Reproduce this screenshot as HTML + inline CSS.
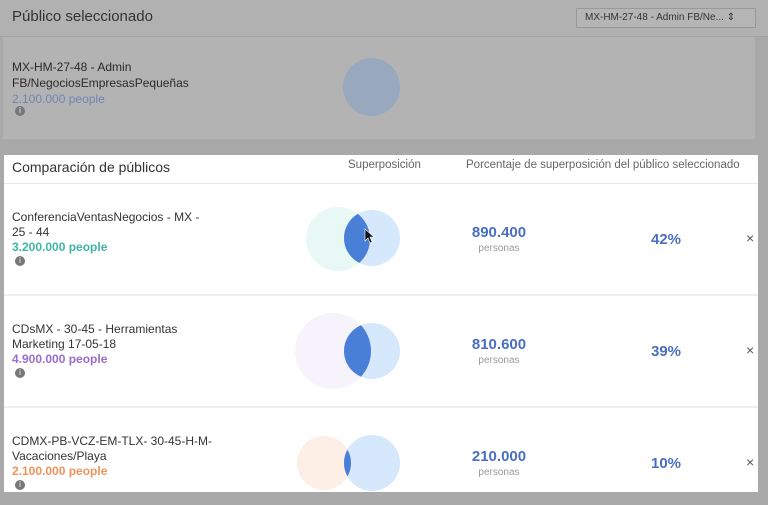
<!DOCTYPE html><html><head><style>
body{margin:0;width:768px;height:505px;overflow:hidden;background:#a9a9a9;font-family:"Liberation Sans",sans-serif;position:relative}
.a{position:absolute}
.t{font-size:12px;color:#333;line-height:15px}
.i{width:10px;height:10px;border-radius:50%;background:#777;color:#ccc;font-size:8px;text-align:center;line-height:10px;font-weight:bold}
.n{font-size:15px;color:#4a6fc0;font-weight:bold;width:120px;text-align:center}
.p{font-size:10px;color:#999;width:120px;text-align:center}
.pc{font-size:15px;color:#4a6fc0;font-weight:bold}
.x{font-size:14px;color:#555}
</style></head><body>
<div class="a" style="left:0;top:0;width:768px;height:36px;background:#b1b1b1;border-bottom:1px solid #a2a2a2"></div>
<div class="a" style="left:12px;top:8px;font-size:15px;color:#333">Público seleccionado</div>
<div class="a" style="left:576px;top:8px;width:178px;height:18px;border:1px solid #999;background:#b5b5b5;font-size:10px;line-height:18px;color:#333;text-indent:8px">MX-HM-27-48 - Admin FB/Ne... ⇕</div>
<div class="a" style="left:3px;top:37px;width:752px;height:102px;background:#b3b3b3"></div>
<div class="a t" style="left:12px;top:59px;color:#2a2a2a;line-height:16px">MX-HM-27-48 - Admin<br>FB/NegociosEmpresasPequeñas<br><span style="color:#6f86b4">2.100.000 people</span></div>
<div class="a i" style="left:15px;top:106px">i</div>
<div class="a" style="left:343px;top:58px;width:57px;height:58px;border-radius:50%;background:#98a9bf"></div>
<div class="a" style="left:4px;top:155px;width:754px;height:337px;background:#fff"></div>
<div class="a" style="left:4px;top:183px;width:754px;height:1px;background:#e6e6e6"></div>
<div class="a" style="left:4px;top:294px;width:754px;height:2px;background:#eee"></div>
<div class="a" style="left:4px;top:406px;width:754px;height:2px;background:#eee"></div>
<div class="a" style="left:12px;top:159px;font-size:14px;color:#333">Comparación de públicos</div>
<div class="a" style="left:348px;top:159px;font-size:11.5px;color:#666">Superposición</div>
<div class="a" style="left:466px;top:159px;font-size:11.5px;color:#666;white-space:nowrap">Porcentaje de superposición del público seleccionado</div>
<svg class="a" style="left:0;top:0" width="768" height="505">
<defs><clipPath id="c1"><circle cx="372" cy="238" r="28"/></clipPath><clipPath id="c2"><circle cx="372" cy="351" r="28"/></clipPath><clipPath id="c3"><circle cx="372" cy="463" r="28"/></clipPath></defs>
<circle cx="338" cy="239" r="32" fill="#e8f8f5"/><circle cx="372" cy="238" r="28" fill="#d6e8fb"/><circle cx="338" cy="239" r="32" fill="#4a7fd8" clip-path="url(#c1)"/>
<circle cx="333" cy="351" r="38" fill="#f7f3fc"/><circle cx="372" cy="351" r="28" fill="#d6e8fb"/><circle cx="333" cy="351" r="38" fill="#4a7fd8" clip-path="url(#c2)"/>
<circle cx="324" cy="463" r="27" fill="#fdeee6"/><circle cx="372" cy="463" r="28" fill="#d6e8fb"/><circle cx="324" cy="463" r="27" fill="#4a7fd8" clip-path="url(#c3)"/>
<path d="M365 229 l0 12 l3 -3 l2 5 l2 -1 l-2 -5 l4 0z" fill="#111" stroke="#fff" stroke-width=".6"/>
</svg>
<div class="a t" style="left:12px;top:210px">ConferenciaVentasNegocios - MX -<br>25 - 44<br><b style="color:#3fb5a8">3.200.000 people</b></div>
<div class="a i" style="left:15px;top:256px">i</div>
<div class="a t" style="left:12px;top:322px">CDsMX - 30-45 - Herramientas<br>Marketing 17-05-18<br><b style="color:#9a6ccb">4.900.000 people</b></div>
<div class="a i" style="left:15px;top:368px">i</div>
<div class="a t" style="left:12px;top:434px">CDMX-PB-VCZ-EM-TLX- 30-45-H-M-<br>Vacaciones/Playa<br><b style="color:#f0935b">2.100.000 people</b></div>
<div class="a i" style="left:15px;top:480px">i</div>
<div class="a n" style="left:439px;top:224px">890.400</div><div class="a p" style="left:439px;top:243px">personas</div>
<div class="a n" style="left:439px;top:336px">810.600</div><div class="a p" style="left:439px;top:355px">personas</div>
<div class="a n" style="left:439px;top:448px">210.000</div><div class="a p" style="left:439px;top:467px">personas</div>
<div class="a pc" style="left:651px;top:231px">42%</div>
<div class="a pc" style="left:651px;top:343px">39%</div>
<div class="a pc" style="left:651px;top:455px">10%</div>
<div class="a x" style="left:746px;top:230px">×</div>
<div class="a x" style="left:746px;top:342px">×</div>
<div class="a x" style="left:746px;top:454px">×</div>
</body></html>
